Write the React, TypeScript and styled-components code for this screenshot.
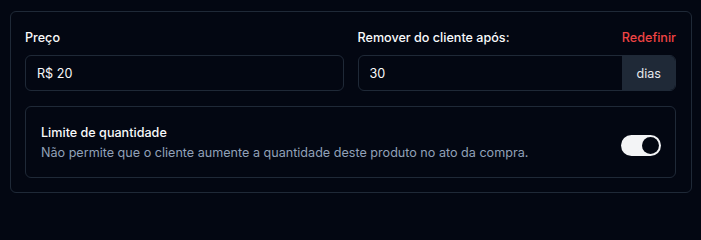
import React, { useState } from "react";
import styled, { createGlobalStyle } from "styled-components";

const Global = createGlobalStyle`
  html, body { margin: 0; padding: 0; background: #030712; }
  body { font-family: Inter, "Noto Sans", sans-serif; color: #f9fafb; -webkit-font-smoothing: antialiased; }
  * { box-sizing: border-box; }
`;

const Page = styled.div`
  padding: 11px 9px 8px 10px;
  width: 701px;
`;

const Card = styled.div`
  border: 1px solid #1f2937;
  border-radius: 6px;
  padding: 16px 15px 14px 14px;
  display: flex;
  flex-direction: column;
  gap: 15px;
`;

const Row = styled.div`
  display: grid;
  grid-template-columns: 1fr 1fr;
  gap: 14px;
`;

const Field = styled.div`
  display: flex;
  flex-direction: column;
  gap: 7px;
`;

const LabelRow = styled.div`
  display: flex;
  justify-content: space-between;
  align-items: center;
`;

const Label = styled.label`
  font-size: 12.6px;
  line-height: 20px;
  font-weight: 500;
  color: #f9fafb;
`;

const ResetLink = styled.button`
  background: none;
  border: 0;
  padding: 0;
  font: inherit;
  font-size: 12.6px;
  line-height: 20px;
  font-weight: 500;
  color: #ef4444;
  cursor: pointer;
`;

const InputGroup = styled.div`
  display: flex;
  height: 36px;
  border: 1px solid #1f2937;
  border-radius: 6px;
  overflow: hidden;
`;

const Input = styled.input`
  flex: 1;
  min-width: 0;
  background: transparent;
  border: 0;
  outline: none;
  padding: 0 11px;
  font-family: inherit;
  font-size: 12.6px;
  color: #f9fafb;
`;

const Addon = styled.span`
  display: flex;
  align-items: center;
  padding: 0 14px 0 15px;
  background: #1f2937;
  font-size: 12.6px;
  color: #e5e7eb;
`;

const OptionCard = styled.div`
  border: 1px solid #1f2937;
  border-radius: 6px;
  padding: 16px 14px 14px 15px;
  display: flex;
  align-items: center;
  justify-content: space-between;
`;

const OptionText = styled.div`
  display: flex;
  flex-direction: column;
`;

const OptionTitle = styled.div`
  font-size: 12.6px;
  line-height: 20px;
  font-weight: 500;
  color: #f9fafb;
`;

const OptionDesc = styled.div`
  font-size: 12.6px;
  line-height: 20px;
  color: #91a1b8;
`;

const Switch = styled.button<{ $on: boolean }>`
  width: 40px;
  height: 21px;
  margin-top: 5px;
  border-radius: 999px;
  border: 2px solid transparent;
  padding: 0;
  background: ${(p) => (p.$on ? "#f3f4f6" : "#1f2937")};
  display: flex;
  align-items: center;
  cursor: pointer;
`;

const Thumb = styled.span<{ $on: boolean }>`
  width: 17px;
  height: 17px;
  border-radius: 50%;
  background: #030712;
  transform: translateX(${(p) => (p.$on ? "19px" : "0")});
`;

export default function App() {
  const [on, setOn] = useState(true);
  return (
    <Page>
      <Global />
      <Card>
        <Row>
          <Field>
            <Label>Preço</Label>
            <InputGroup>
              <Input defaultValue="R$ 20" />
            </InputGroup>
          </Field>
          <Field>
            <LabelRow>
              <Label>Remover do cliente após:</Label>
              <ResetLink>Redefinir</ResetLink>
            </LabelRow>
            <InputGroup>
              <Input defaultValue="30" />
              <Addon>dias</Addon>
            </InputGroup>
          </Field>
        </Row>
        <OptionCard>
          <OptionText>
            <OptionTitle>Limite de quantidade</OptionTitle>
            <OptionDesc>
              Não permite que o cliente aumente a quantidade deste produto no ato da compra.
            </OptionDesc>
          </OptionText>
          <Switch $on={on} onClick={() => setOn(!on)}>
            <Thumb $on={on} />
          </Switch>
        </OptionCard>
      </Card>
    </Page>
  );
}
